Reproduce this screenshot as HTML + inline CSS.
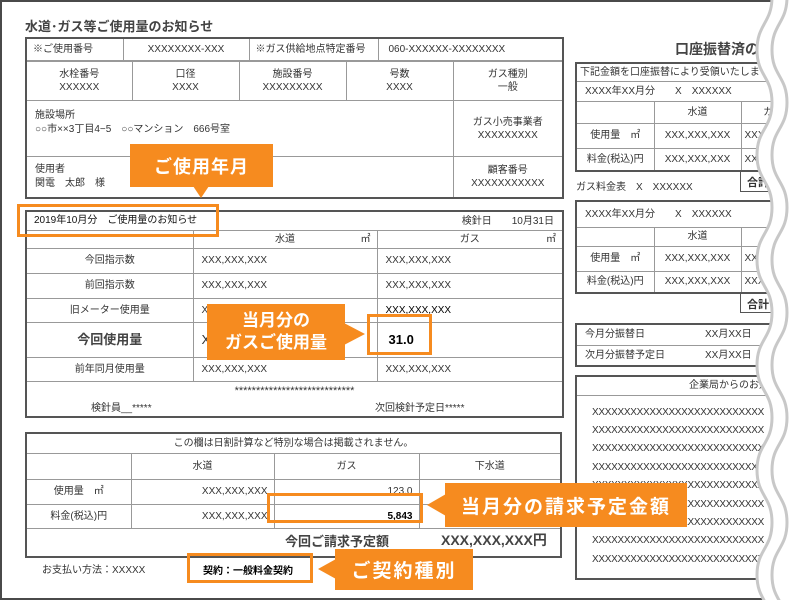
<!DOCTYPE html>
<html><head><meta charset="utf-8">
<style>
*{box-sizing:border-box;margin:0;padding:0}
body{width:797px;height:600px;position:relative;overflow:hidden;background:#fff;font-family:"Liberation Sans","Noto Sans CJK JP",sans-serif;color:#333;font-size:10px}
.a{position:absolute;white-space:nowrap}
table{position:absolute;border-collapse:collapse;table-layout:fixed;border:2px solid #555}
td{border:1px solid #999;padding:0;font-size:10px;line-height:13px;text-align:center;vertical-align:middle;white-space:nowrap;overflow:hidden}
.l{text-align:left;padding-left:8px}
.r{text-align:right;padding-right:6px}
.ob{position:absolute;border:3px solid #f68b1f}
.co{position:absolute;background:#f68b1f;color:#fff;font-weight:bold;display:flex;align-items:center;justify-content:center;text-align:center;white-space:nowrap}
</style></head><body>
<div class="a" style="left:0;top:0;width:797px;height:600px;border:2px solid #4a4a4a"></div>

<div class="a" style="left:25px;top:16px;font-size:13px;font-weight:bold;color:#444">水道･ガス等ご使用量のお知らせ</div>

<table style="left:25px;top:37px;width:537px;border-bottom:1px solid #999">
<colgroup><col style="width:97px"><col style="width:126px"><col style="width:129px"><col style="width:185px"></colgroup>
<tr style="height:23px"><td class="l" style="padding-left:6px">※ご使用番号</td><td>XXXXXXXX-XXX</td><td class="l" style="padding-left:6px">※ガス供給地点特定番号</td><td class="l" style="padding-left:10px">060-XXXXXX-XXXXXXXX</td></tr>
</table>
<table style="left:25px;top:60px;width:537px;border-top:none">
<colgroup><col style="width:106px"><col style="width:107px"><col style="width:107px"><col style="width:107px"><col style="width:110px"></colgroup>
<tr style="height:40px"><td>水栓番号<br>XXXXXX</td><td>口径<br>XXXX</td><td>施設番号<br>XXXXXXXXX</td><td>号数<br>XXXX</td><td>ガス種別<br>一般</td></tr>
<tr style="height:56px"><td colspan="4" class="l" style="vertical-align:top;padding-top:8px;line-height:14px">施設場所<br>○○市××3丁目4−5　○○マンション　666号室</td><td>ガス小売事業者<br>XXXXXXXXX</td></tr>
<tr style="height:41px"><td colspan="4" class="l" style="line-height:14px">使用者<br>関電　太郎　様</td><td>顧客番号<br>XXXXXXXXXXX</td></tr>
</table>

<table style="left:25px;top:210px;width:537px">
<colgroup><col style="width:167px"><col style="width:184px"><col style="width:186px"></colgroup>
<tr style="height:19px"><td colspan="3" style="position:relative;text-align:left;padding-left:7px;color:#111">2019年10月分　ご使用量のお知らせ<span style="position:absolute;right:8px;top:3px;color:#333">検針日　　10月31日</span></td></tr>
<tr style="height:18px"><td></td><td style="position:relative">水道<span style="position:absolute;right:6px">㎡</span></td><td style="position:relative">ガス<span style="position:absolute;right:6px">㎡</span></td></tr>
<tr style="height:25px"><td>今回指示数</td><td class="l">XXX,XXX,XXX</td><td class="l">XXX,XXX,XXX</td></tr>
<tr style="height:25px"><td>前回指示数</td><td class="l">XXX,XXX,XXX</td><td class="l">XXX,XXX,XXX</td></tr>
<tr style="height:24px"><td>旧メーター使用量</td><td class="l">XXX,XXX,XXX</td><td class="l" style="color:#000">XXX,XXX,XXX</td></tr>
<tr style="height:35px"><td style="font-size:13px;font-weight:bold;color:#444">今回使用量</td><td class="l" style="font-size:13px">X</td><td class="l" style="font-size:13px;font-weight:bold;color:#000;padding-left:11px">31.0</td></tr>
<tr style="height:24px"><td>前年同月使用量</td><td class="l">XXX,XXX,XXX</td><td class="l">XXX,XXX,XXX</td></tr>
<tr style="height:36px"><td colspan="3" style="position:relative"><span style="position:absolute;left:0;right:0;top:3px;font-size:11px">****************************</span><span style="position:absolute;left:64px;top:20px">検針員__*****</span><span style="position:absolute;left:348px;top:20px">次回検針予定日*****</span></td></tr>
</table>

<table style="left:25px;top:432px;width:535px">
<colgroup><col style="width:105px"><col style="width:143px"><col style="width:145px"><col style="width:142px"></colgroup>
<tr style="height:20px"><td colspan="4">この欄は日割計算など特別な場合は掲載されません。</td></tr>
<tr style="height:26px"><td></td><td>水道</td><td>ガス</td><td>下水道</td></tr>
<tr style="height:25px"><td>使用量　㎡</td><td class="r">XXX,XXX,XXX</td><td class="r">123.0</td><td class="r">XXX,XXX,XXX</td></tr>
<tr style="height:24px"><td>料金(税込)円</td><td class="r">XXX,XXX,XXX</td><td class="r" style="color:#000;font-weight:bold">5,843</td><td class="r">XXX,XXX,XXX</td></tr>
<tr style="height:29px"><td colspan="4" style="position:relative"><span style="position:absolute;left:258px;top:6px;font-size:13px;font-weight:bold;color:#444">今回ご請求予定額</span><span style="position:absolute;left:414px;top:5px;font-size:14px;font-weight:bold;color:#444">XXX,XXX,XXX円</span></td></tr>
</table>

<div class="a" style="left:42px;top:561px">お支払い方法：XXXXX</div>
<div class="a" style="left:203px;top:562px;color:#000;font-weight:bold">契約：一般料金契約</div>

<!-- right side -->
<div class="a" style="left:675px;top:39px;font-size:14px;font-weight:bold;color:#444">口座振替済のお知らせ</div>
<table style="left:575px;top:62px;width:230px">
<colgroup><col style="width:78px"><col style="width:87px"><col style="width:65px"></colgroup>
<tr style="height:18px"><td colspan="3" class="l" style="padding-left:3px">下記金額を口座振替により受領いたしました</td></tr>
<tr style="height:20px"><td colspan="3" class="l">XXXX年XX月分　　X　XXXXXX</td></tr>
<tr style="height:22px"><td></td><td>水道</td><td>ガス</td></tr>
<tr style="height:25px"><td>使用量　㎡</td><td>XXX,XXX,XXX</td><td class="l" style="padding-left:3px">XXX,XXX</td></tr>
<tr style="height:23px"><td>料金(税込)円</td><td>XXX,XXX,XXX</td><td class="l" style="padding-left:3px">XXX,XXX</td></tr>
</table>
<div class="a" style="left:740px;top:170px;width:60px;height:22px;border-left:1px solid #555;border-bottom:1px solid #555;font-size:11px;font-weight:bold;padding:4px 0 0 6px">合計</div>
<div class="a" style="left:576px;top:178px">ガス料金表　X　XXXXXX</div>

<table style="left:575px;top:200px;width:230px">
<colgroup><col style="width:78px"><col style="width:87px"><col style="width:65px"></colgroup>
<tr style="height:26px"><td colspan="3" class="l">XXXX年XX月分　　X　XXXXXX</td></tr>
<tr style="height:19px"><td></td><td>水道</td><td>ガス</td></tr>
<tr style="height:25px"><td>使用量　㎡</td><td>XXX,XXX,XXX</td><td class="l" style="padding-left:3px">XXX,XXX</td></tr>
<tr style="height:22px"><td>料金(税込)円</td><td>XXX,XXX,XXX</td><td class="l" style="padding-left:3px">XXX,XXX</td></tr>
</table>
<div class="a" style="left:740px;top:292px;width:60px;height:21px;border-left:1px solid #555;border-bottom:1px solid #555;font-size:11px;font-weight:bold;padding:4px 0 0 6px">合計</div>

<table style="left:575px;top:323px;width:230px">
<tr style="height:21px"><td class="l" style="position:relative">今月分振替日<span style="position:absolute;left:128px">XX月XX日</span></td></tr>
<tr style="height:21px"><td class="l" style="position:relative">次月分振替予定日<span style="position:absolute;left:128px">XX月XX日</span></td></tr>
</table>

<table style="left:575px;top:375px;width:230px">
<tr style="height:19px"><td class="l" style="padding-left:112px">企業局からのお知らせ</td></tr>
<tr style="height:184px"><td class="l" style="vertical-align:top;padding-left:15px;padding-top:8px;line-height:18.4px;letter-spacing:-0.3px">XXXXXXXXXXXXXXXXXXXXXXXXXXX<br>XXXXXXXXXXXXXXXXXXXXXXXXXXX<br>XXXXXXXXXXXXXXXXXXXXXXXXXXX<br>XXXXXXXXXXXXXXXXXXXXXXXXXXX<br>XXXXXXXXXXXXXXXXXXXXXXXXXXX<br>XXXXXXXXXXXXXXXXXXXXXXXXXXX<br>XXXXXXXXXXXXXXXXXXXXXXXXXXX<br>XXXXXXXXXXXXXXXXXXXXXXXXXXX<br>XXXXXXXXXXXXXXXXXXXXXXXXXXX</td></tr>
</table>

<!-- highlights & callouts -->
<div class="co" style="left:130px;top:144px;width:143px;height:43px;font-size:18px;letter-spacing:1px">ご使用年月</div>
<div class="a" style="left:193px;top:186px;width:0;height:0;border-left:8px solid transparent;border-right:8px solid transparent;border-top:12px solid #f68b1f"></div>
<div class="ob" style="left:17px;top:204px;width:202px;height:33px"></div>
<div class="ob" style="left:367px;top:314px;width:65px;height:41px"></div>
<div class="co" style="left:207px;top:304px;width:138px;height:56px;font-size:17px;line-height:22px">当月分の<br>ガスご使用量</div>
<div class="a" style="left:344px;top:323px;width:0;height:0;border-top:11px solid transparent;border-bottom:11px solid transparent;border-left:21px solid #f68b1f"></div>
<div class="ob" style="left:267px;top:493px;width:156px;height:30px"></div>
<div class="co" style="left:445px;top:483px;width:242px;height:44px;font-size:19px;letter-spacing:2px">当月分の請求予定金額</div>
<div class="a" style="left:427px;top:494px;width:0;height:0;border-top:11px solid transparent;border-bottom:11px solid transparent;border-right:19px solid #f68b1f"></div>
<div class="ob" style="left:187px;top:553px;width:126px;height:30px"></div>
<div class="co" style="left:335px;top:549px;width:138px;height:41px;font-size:19px;letter-spacing:2px">ご契約種別</div>
<div class="a" style="left:318px;top:559px;width:0;height:0;border-top:10px solid transparent;border-bottom:10px solid transparent;border-right:18px solid #f68b1f"></div>

<svg class="a" style="left:0;top:0" width="797" height="600" viewBox="0 0 797 600">
<path d="M772 -3 C772 23 757 24 757 50 S772 76 772 102.5 S757 129 757 155 S772 181 772 207.5 S757 234 757 260 S772 286 772 312.5 S757 339 757 365 S772 391 772 417.5 S757 444 757 470 S772 496 772 522.5 S757 549 757 575 S772 601 772 627.5 L800 627.5 L800 -3 Z" fill="#fff"/>
<g fill="none" stroke="#c8c8c8" stroke-width="3">
<path d="M772 -3 C772 23 757 24 757 50 S772 76 772 102.5 S757 129 757 155 S772 181 772 207.5 S757 234 757 260 S772 286 772 312.5 S757 339 757 365 S772 391 772 417.5 S757 444 757 470 S772 496 772 522.5 S757 549 757 575 S772 601 772 627.5"/>
<path transform="translate(15,0)" d="M772 -3 C772 23 757 24 757 50 S772 76 772 102.5 S757 129 757 155 S772 181 772 207.5 S757 234 757 260 S772 286 772 312.5 S757 339 757 365 S772 391 772 417.5 S757 444 757 470 S772 496 772 522.5 S757 549 757 575 S772 601 772 627.5"/>
</g>
</svg>
</body></html>
